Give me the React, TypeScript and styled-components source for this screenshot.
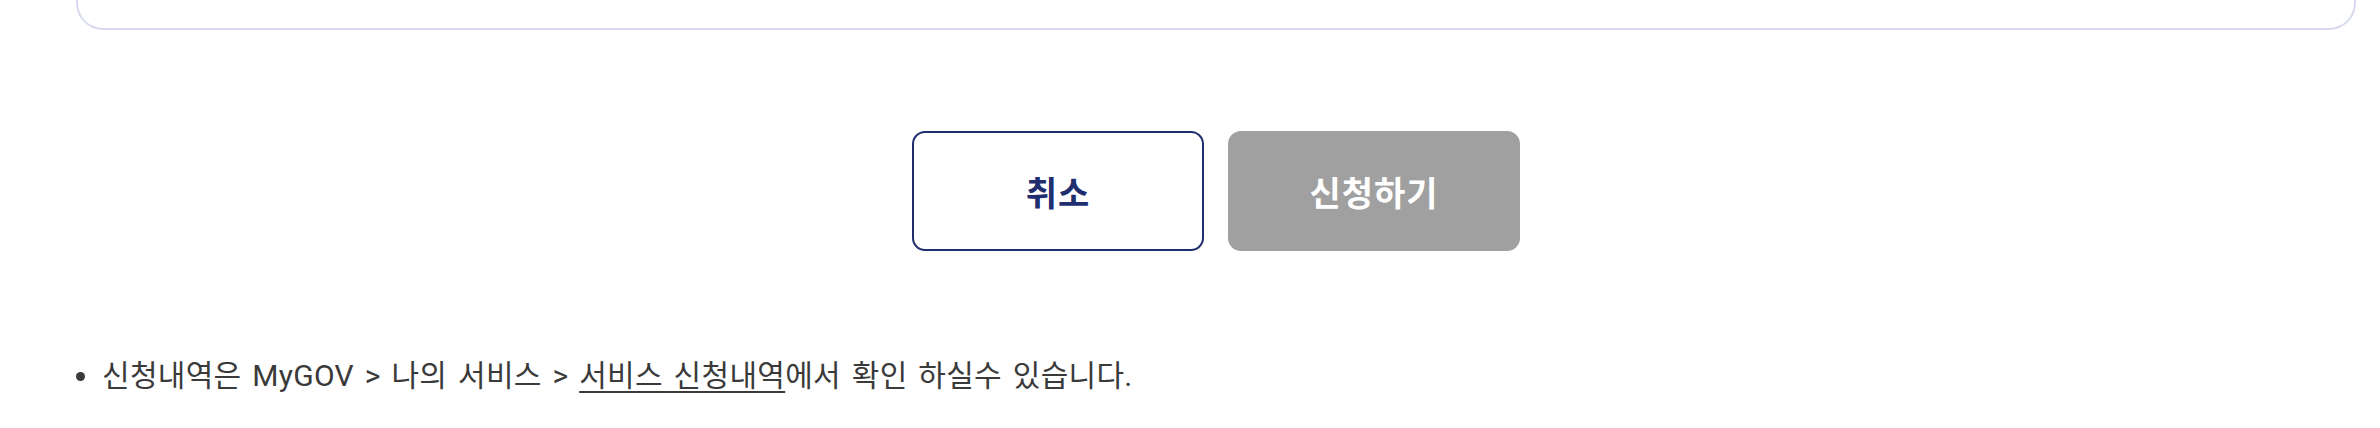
import styled, { createGlobalStyle } from "styled-components";

const GlobalStyle = createGlobalStyle`
   * {
      box-sizing: border-box;
   }

   body {
      margin: 0;
      background: #ffffff;
      font-family: Roboto, "Noto Sans CJK KR", sans-serif;
   }
`;

const Pagina = styled.main`
   width: 2380px;
   height: 428px;
   padding: 0 24px 0 76px;
   overflow: hidden;
`;

const CaixaFormulario = styled.section`
   height: 30px;
   border: 2px solid #d8dbf0;
   border-top: none;
   border-radius: 0 0 27px 27px;
`;

const Botoes = styled.div`
   display: flex;
   justify-content: center;
   gap: 24px;
   margin-top: 101px;
`;

const Botao = styled.button<{ $primario?: boolean }>`
   width: 292px;
   height: 120px;
   display: flex;
   align-items: center;
   justify-content: center;
   border-radius: 13px;
   font-family: "Noto Sans CJK KR", sans-serif;
   font-size: 34px;
   font-weight: 700;
   letter-spacing: 1px;
   cursor: pointer;
   border: ${({ $primario }) => ($primario ? "none" : "2px solid #202d6e")};
   background: ${({ $primario }) => ($primario ? "#a0a0a0" : "#ffffff")};
   color: ${({ $primario }) => ($primario ? "#ffffff" : "#202d6e")};
`;

const ListaAviso = styled.ul`
   list-style: none;
   margin: 104px 0 0 0;
   padding: 0;
`;

const ItemAviso = styled.li`
   display: flex;
   align-items: center;
   gap: 17px;
   font-size: 30px;
   line-height: 42px;
   color: #3a3a3a;
   letter-spacing: 0.3px;
   word-spacing: 3px;

   &::before {
      content: "";
      flex-shrink: 0;
      width: 9px;
      height: 9px;
      border-radius: 50%;
      background: #3a3a3a;
   }
`;

const Link = styled.a`
   color: inherit;
   text-decoration: underline;
   text-decoration-thickness: 2px;
   text-underline-offset: 5px;
`;

const App = () => {
   return (
      <>
         <GlobalStyle />
         <Pagina>
            <CaixaFormulario />
            <Botoes>
               <Botao type="button">취소</Botao>
               <Botao type="button" $primario>
                  신청하기
               </Botao>
            </Botoes>
            <ListaAviso>
               <ItemAviso>
                  <span>
                     신청내역은 MyGOV &gt; 나의 서비스 &gt; <Link href="#">서비스 신청내역</Link>에서 확인 하실수 있습니다.
                  </span>
               </ItemAviso>
            </ListaAviso>
         </Pagina>
      </>
   );
};

export default App;
